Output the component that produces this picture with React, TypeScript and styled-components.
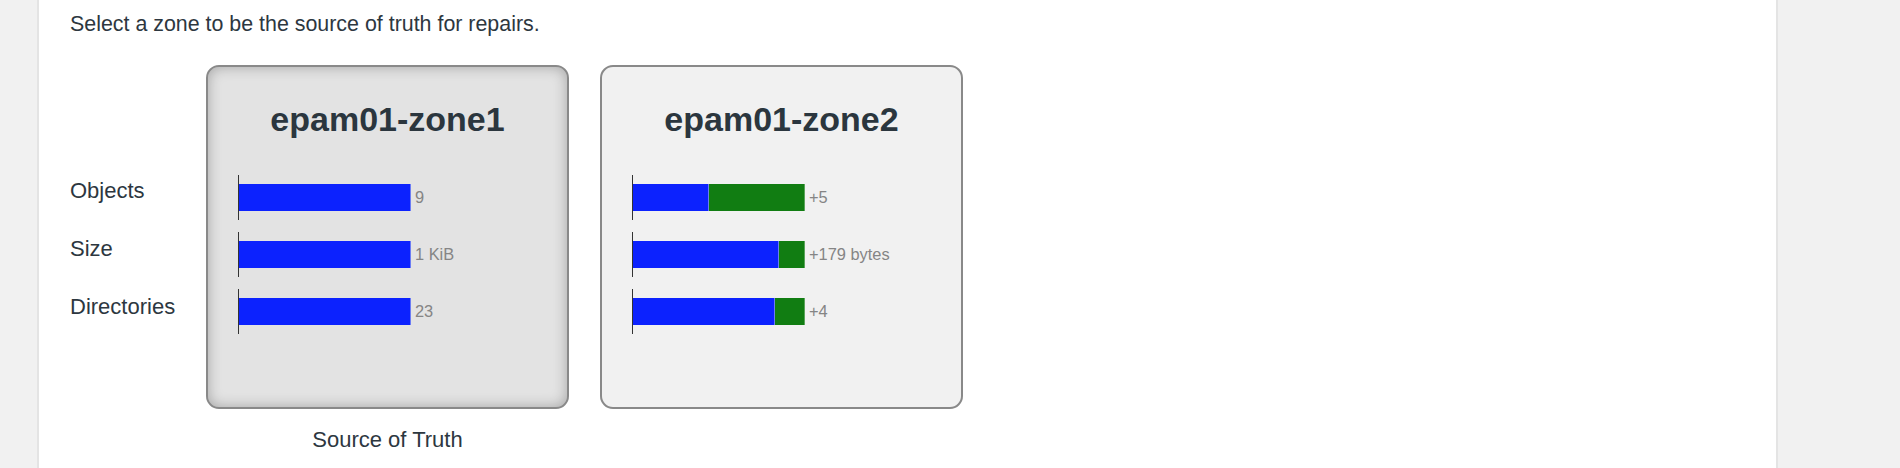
import styled, { createGlobalStyle } from 'styled-components';

const GlobalStyle = createGlobalStyle`
  html, body {
    margin: 0;
    padding: 0;
    background: #f1f1f1;
    font-family: "Liberation Sans", Arial, Helvetica, sans-serif;
    color: #2d373f;
  }
`;

type Segment = { width: number; kind: 'base' | 'diff' };
type Metric = { segments: Segment[]; label: string };
type Zone = { name: string; selected: boolean; metrics: Metric[] };

const ZONES: Zone[] = [
  {
    name: 'epam01-zone1',
    selected: true,
    metrics: [
      { segments: [{ width: 172, kind: 'base' }], label: '9' },
      { segments: [{ width: 172, kind: 'base' }], label: '1 KiB' },
      { segments: [{ width: 172, kind: 'base' }], label: '23' },
    ],
  },
  {
    name: 'epam01-zone2',
    selected: false,
    metrics: [
      {
        segments: [
          { width: 76, kind: 'base' },
          { width: 96, kind: 'diff' },
        ],
        label: '+5',
      },
      {
        segments: [
          { width: 146, kind: 'base' },
          { width: 26, kind: 'diff' },
        ],
        label: '+179 bytes',
      },
      {
        segments: [
          { width: 142, kind: 'base' },
          { width: 30, kind: 'diff' },
        ],
        label: '+4',
      },
    ],
  },
];

const METRIC_NAMES = ['Objects', 'Size', 'Directories'];

export default function App() {
  return (
    <>
      <GlobalStyle />
      <Panel>
        <Intro>Select a zone to be the source of truth for repairs.</Intro>
        <Chooser>
          <LabelColumn>
            {METRIC_NAMES.map((name) => (
              <MetricName key={name}>{name}</MetricName>
            ))}
          </LabelColumn>
          {ZONES.map((zone) => (
            <ZoneColumn key={zone.name}>
              <ZoneCard $selected={zone.selected}>
                <ZoneTitle>{zone.name}</ZoneTitle>
                <Bars>
                  {zone.metrics.map((metric, i) => (
                    <BarRow key={i}>
                      {metric.segments.map((seg, j) => (
                        <BarSegment key={j} $kind={seg.kind} style={{ width: seg.width }} />
                      ))}
                      <BarValue>{metric.label}</BarValue>
                    </BarRow>
                  ))}
                </Bars>
              </ZoneCard>
              {zone.selected && <Caption>Source of Truth</Caption>}
            </ZoneColumn>
          ))}
        </Chooser>
      </Panel>
    </>
  );
}

const Panel = styled.div`
  box-sizing: border-box;
  margin-left: 37px;
  width: 1741px;
  height: 468px;
  background: #fff;
  border-left: 2px solid #e4e4e4;
  border-right: 2px solid #e4e4e4;
  padding: 11px 0 0 31px;
  overflow: hidden;
`;

const Intro = styled.p`
  margin: 0;
  font-size: 21.4px;
  line-height: 26px;
`;

const Chooser = styled.div`
  display: flex;
  align-items: flex-start;
  gap: 31px;
  margin-top: 28px;
`;

const LabelColumn = styled.div`
  width: 105px;
  padding-top: 97px;
  display: flex;
  flex-direction: column;
`;

const MetricName = styled.div`
  font-size: 22px;
  line-height: 58px;
`;

const ZoneColumn = styled.div`
  display: flex;
  flex-direction: column;
  align-items: center;
`;

const ZoneCard = styled.div<{ $selected: boolean }>`
  box-sizing: border-box;
  width: 363px;
  height: 344px;
  border: 2px solid #898989;
  border-radius: 13px;
  padding: 32px 0 0 30px;
  background: ${(p) => (p.$selected ? '#e3e3e3' : '#f1f1f1')};
  box-shadow: ${(p) => (p.$selected ? 'inset 0 0 14px rgba(0, 0, 0, 0.28)' : 'none')};
`;

const ZoneTitle = styled.h2`
  margin: 0 0 0 -30px;
  text-align: center;
  font-size: 34px;
  line-height: 40px;
  font-weight: bold;
  color: #2b363e;
`;

const Bars = styled.div`
  margin-top: 36px;
  display: flex;
  flex-direction: column;
  gap: 12px;
`;

const BarRow = styled.div`
  height: 45px;
  display: flex;
  align-items: center;
  border-left: 1px solid #333;
`;

const BarSegment = styled.div<{ $kind: 'base' | 'diff' }>`
  height: 27px;
  background: ${(p) => (p.$kind === 'base' ? '#0c22fe' : '#117d12')};
  box-shadow: inset -1px 0 0 ${(p) => (p.$kind === 'base' ? '#6b7cf4' : '#5aa45a')};
`;

const BarValue = styled.span`
  margin-left: 4px;
  font-size: 16.4px;
  color: #858585;
`;

const Caption = styled.div`
  margin-top: 18px;
  font-size: 22px;
  line-height: 26px;
`;
